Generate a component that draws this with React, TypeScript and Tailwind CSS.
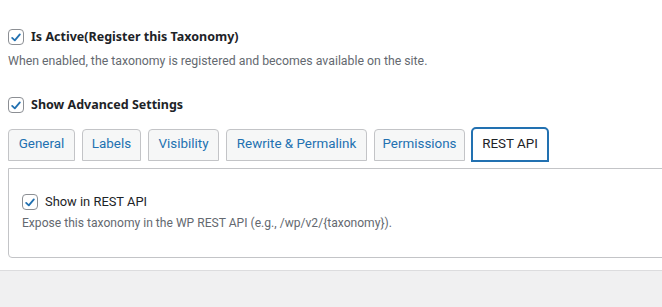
import React from "react";

const Check = () => (
  <span className="flex h-4 w-4 shrink-0 items-center justify-center rounded-[4px] border border-[#8c8f94] bg-white">
    <svg viewBox="0 0 20 20" className="h-[15px] w-[15px]">
      <path d="M4.5 10.5 L8.3 14 L15.5 5.5" fill="none" stroke="#2271b1" strokeWidth="2.6" strokeLinecap="round" strokeLinejoin="round" />
    </svg>
  </span>
);

const tabs: [string, string][] = [
  ["General", "w-[67px]"],
  ["Labels", "w-[59px]"],
  ["Visibility", "w-[71px]"],
  ["Rewrite & Permalink", "w-[141px]"],
  ["Permissions", "w-[91px]"],
];

const bold = { fontFamily: '"Noto Sans", sans-serif' };

export default function App() {
  return (
    <div className="flex h-[307px] w-full flex-col overflow-hidden bg-[#f0f0f1] text-[12.3px] text-[#1d2327]" style={{ fontFamily: 'Roboto, "Noto Sans", sans-serif' }}>
      <div className="h-[271px] shrink-0 border-b border-[#dcdcde] bg-white pl-2">
        <div className="mt-[29px] flex h-4 items-center gap-[7px]">
          <Check />
          <span className="text-[12.5px] font-bold leading-none" style={bold}>Is Active(Register this Taxonomy)</span>
        </div>
        <p className="mt-[6px] whitespace-nowrap leading-[20px] text-[#646970]">When enabled, the taxonomy is registered and becomes available on the site.</p>
        <div className="mt-[26px] flex h-4 items-center gap-[7px]">
          <Check />
          <span className="text-[12.5px] font-bold leading-none" style={bold}>Show Advanced Settings</span>
        </div>
        <div className="mt-[15px] flex h-[33px] items-center gap-[7px] text-[13.4px]">
          {tabs.map(([t, w]) => (
            <div key={t} className={`flex h-[32px] items-center justify-center rounded-t-[4px] border border-[#c3c4c7] bg-[#f6f7f7] text-[#2271b1] ${w}`}>
              {t}
            </div>
          ))}
          <div className="-ml-px flex h-[35px] w-[78px] items-center justify-center rounded-t-[5px] border-2 border-[#2271b1] bg-white text-[#1d2327]">
            REST API
          </div>
        </div>
        <div className="mt-[7px] -mr-4 h-[90px] rounded-b-[4px] border border-[#c3c4c7] pl-[13px] pt-[25px]">
          <div className="flex h-4 items-center gap-[7px]">
            <Check />
            <span className="text-[12.9px] leading-none">Show in REST API</span>
          </div>
          <p className="mt-[3px] whitespace-nowrap text-[12.1px] leading-[20px] text-[#646970]">Expose this taxonomy in the WP REST API (e.g., /wp/v2/{"{taxonomy}"}).</p>
        </div>
      </div>
    </div>
  );
}
